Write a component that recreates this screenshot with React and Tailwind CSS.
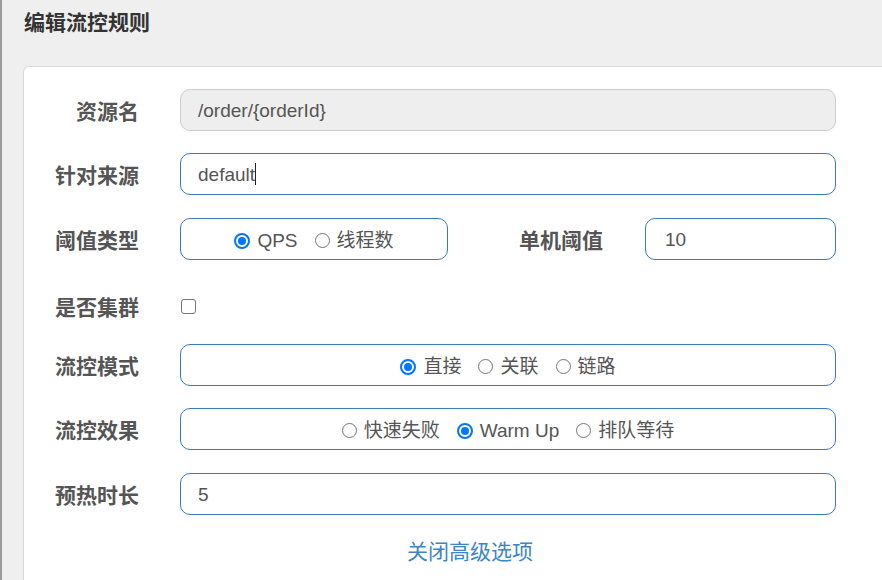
import React from 'react';

const FONT = '"Liberation Sans", "Noto Sans CJK SC", sans-serif';

// round radio, drawn so it looks like the browser's default
const Radio = ({ checked }) =>
    checked ? (
        <span className="w-[16px] h-[16px] rounded-full border-2 border-[#0075ff] bg-white flex items-center justify-center shrink-0">
            <span className="w-[8px] h-[8px] rounded-full bg-[#0075ff]" />
        </span>
    ) : (
        <span className="w-[15px] h-[15px] rounded-full border border-[#767676] bg-white shrink-0" />
    );

const RadioGroup = ({ options, value }) => (
    <div className="flex items-center justify-center gap-[17px] h-full pt-[3px]">
        {options.map((opt) => (
            <label key={opt} className="flex items-center gap-[7px] text-[19px] text-[#555]">
                <Radio checked={opt === value} />
                <span className="leading-none">{opt}</span>
            </label>
        ))}
    </div>
);

const Label = ({ children, className = 'w-[115px]' }) => (
    <div className={`${className} shrink-0 text-right text-[21px] font-bold text-[#555] leading-none pt-[3px]`}>
        {children}
    </div>
);

const Box = ({ children, className = 'w-[656px]', readOnly }) => (
    <div
        className={`${className} h-[42px] rounded-[10px] border shrink-0 ${
            readOnly ? 'bg-[#eee] border-[#ccc]' : 'bg-white border-[#3a7bbf]'
        }`}
    >
        {children}
    </div>
);

const InputText = ({ children, cursor }) => (
    <div className="h-full flex items-center pl-[17px] text-[19px] text-[#555] leading-none">
        <span>{children}</span>
        {cursor && <span className="inline-block w-px h-[22px] bg-[#222]" />}
    </div>
);

export default function App() {
    return (
        <div className="w-[882px] h-[580px] overflow-hidden bg-[#efefef] flex" style={{ fontFamily: FONT }}>
            <div className="w-[2px] bg-[#9b9b9b] shrink-0" />
            <div className="flex-1 flex flex-col">
                {/* dialog title */}
                <div className="h-[66px] shrink-0 pl-[22px] pt-[9px]">
                    <h2 className="text-[21px] font-bold text-[#333] leading-[28px]">编辑流控规则</h2>
                </div>

                {/* form card */}
                <div className="flex-1 ml-[21px] bg-white border-l border-t border-[#d9d9d9] rounded-tl-[6px]">
                    <div className="flex items-center h-[42px] mt-[22px]">
                        <Label>资源名</Label>
                        <div className="ml-[41px]">
                            <Box readOnly>
                                <InputText>/order/{'{orderId}'}</InputText>
                            </Box>
                        </div>
                    </div>

                    <div className="flex items-center h-[42px] mt-[22px]">
                        <Label>针对来源</Label>
                        <div className="ml-[41px]">
                            <Box>
                                <InputText cursor>default</InputText>
                            </Box>
                        </div>
                    </div>

                    <div className="flex items-center h-[42px] mt-[23px]">
                        <Label>阈值类型</Label>
                        <div className="ml-[41px]">
                            <Box className="w-[268px]">
                                <RadioGroup options={['QPS', '线程数']} value="QPS" />
                            </Box>
                        </div>
                        <Label className="w-[155px]">单机阈值</Label>
                        <div className="ml-[42px]">
                            <Box className="w-[191px]">
                                <div className="h-full flex items-center pl-[19px] text-[19px] text-[#555] leading-none">10</div>
                            </Box>
                        </div>
                    </div>

                    <div className="flex items-center h-[42px] mt-[25px]">
                        <Label>是否集群</Label>
                        <div className="ml-[42px] w-[15px] h-[15px] rounded-[3px] border border-[#767676] bg-white" />
                    </div>

                    <div className="flex items-center h-[42px] mt-[17px]">
                        <Label>流控模式</Label>
                        <div className="ml-[41px]">
                            <Box>
                                <RadioGroup options={['直接', '关联', '链路']} value="直接" />
                            </Box>
                        </div>
                    </div>

                    <div className="flex items-center h-[42px] mt-[22px]">
                        <Label>流控效果</Label>
                        <div className="ml-[41px]">
                            <Box>
                                <RadioGroup options={['快速失败', 'Warm Up', '排队等待']} value="Warm Up" />
                            </Box>
                        </div>
                    </div>

                    <div className="flex items-center h-[42px] mt-[23px]">
                        <Label>预热时长</Label>
                        <div className="ml-[41px]">
                            <Box>
                                <InputText>5</InputText>
                            </Box>
                        </div>
                    </div>

                    <div className="w-[892px] mt-[24px] text-center">
                        <a className="text-[21px] text-[#3a86c8] leading-[26px] cursor-pointer">关闭高级选项</a>
                    </div>
                </div>
            </div>
        </div>
    );
}
